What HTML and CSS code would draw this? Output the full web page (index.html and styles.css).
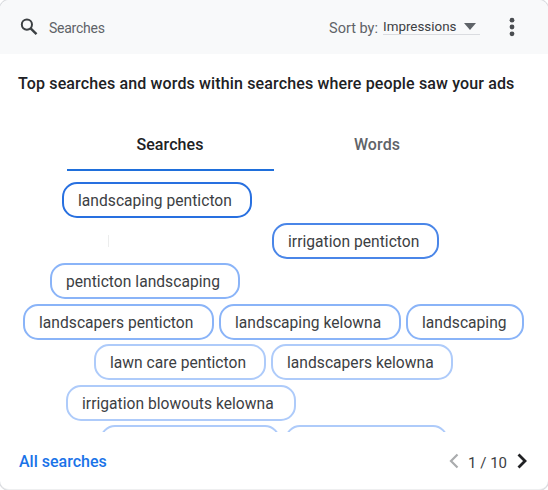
FILE: index.html
```html
<!DOCTYPE html>
<html lang="en">
<head>
    <meta charset="UTF-8">
    <meta name="viewport" content="width=device-width, initial-scale=1.0">
    <title>Searches</title>
    <link rel="stylesheet" href="styles.css">
</head>
<body>
    <div class="card">
        <header class="header">
            <svg class="search-icon" width="18" height="18" viewBox="0 0 18 18">
                <circle cx="6.9" cy="6.6" r="5.1" fill="none" stroke="#3c4043" stroke-width="2"/>
                <path d="M10.6 10.3L16.5 16.2" stroke="#3c4043" stroke-width="2.4"/>
            </svg>
            <span class="header-title">Searches</span>
            <span class="sort-label">Sort by:</span>
            <div class="sort-select">
                <span>Impressions</span>
                <svg width="12" height="7" viewBox="0 0 12 7"><path d="M0 0H12L6 7Z" fill="#5f6368"/></svg>
            </div>
            <svg class="more-icon" width="6" height="20" viewBox="0 0 6 20" fill="#4a4d51">
                <circle cx="3" cy="3.2" r="2.4"/>
                <circle cx="3" cy="10" r="2.4"/>
                <circle cx="3" cy="16.8" r="2.4"/>
            </svg>
        </header>

        <h1 class="title">Top searches and words within searches where people saw your ads</h1>

        <div class="tabs">
            <div class="tab active">Searches</div>
            <div class="tab">Words</div>
        </div>

        <div class="cloud">
            <div class="row row-1">
                <span class="chip w-190 level-1">landscaping penticton</span>
            </div>
            <div class="row row-2">
                <i class="tick"></i>
                <span class="chip w-167 level-2">irrigation penticton</span>
            </div>
            <div class="row row-3">
                <span class="chip w-190 level-3">penticton landscaping</span>
            </div>
            <div class="row row-4">
                <span class="chip w-191 level-3">landscapers penticton</span>
                <span class="chip w-182 level-3">landscaping kelowna</span>
                <span class="chip w-118 level-3">landscaping</span>
            </div>
            <div class="row row-5">
                <span class="chip w-172 level-4">lawn care penticton</span>
                <span class="chip w-182 level-4">landscapers kelowna</span>
            </div>
            <div class="row row-6">
                <span class="chip w-230 level-4">irrigation blowouts kelowna</span>
            </div>
            <div class="row row-7">
                <span class="chip w-180 level-4"></span>
                <span class="chip w-163 level-4"></span>
            </div>
        </div>

        <footer class="footer">
            <a class="all-link">All searches</a>
            <div class="pager">
                <svg width="10" height="16" viewBox="0 0 10 16"><path d="M8.5 1.5L2 8L8.5 14.5" fill="none" stroke="#aaacae" stroke-width="2.2"/></svg>
                <span class="pages">1 / 10</span>
                <svg width="10" height="16" viewBox="0 0 10 16"><path d="M1.5 1.5L8 8L1.5 14.5" fill="none" stroke="#202124" stroke-width="2.8"/></svg>
            </div>
        </footer>
    </div>
</body>
</html>
```
FILE: styles.css
```css
* {
    box-sizing: border-box;
}
body {
    margin: 0;
    background-color: #fff;
    font-family: Roboto, "Liberation Sans", sans-serif;
    color: #3c4043;
}
.card {
    height: 490px;
    display: flex;
    flex-direction: column;
    border-radius: 9px;
    box-shadow: 0 0 0 1px #dadce0;
    border-bottom: 1px solid #eeeff0;
    background-color: #fff;
    overflow: hidden;
}
.header {
    display: flex;
    height: 54px;
    padding: 18px 33px 0 20px;
    background-color: #f8f9fa;
    font-size: 14px;
    line-height: 20px;
}
.header-title {
    margin-left: 11px;
    letter-spacing: -0.25px;
    color: #5f6368;
}
.sort-label {
    margin-left: auto;
    margin-right: 5px;
    padding-top: 1px;
    font-size: 14.5px;
    color: #5f6368;
}
.sort-select {
    display: flex;
    width: 97px;
    height: 17px;
    padding-right: 4px;
    justify-content: space-between;
    align-items: center;
    border-bottom: 1px solid #dadce0;
    font-size: 13.4px;
    line-height: 17px;
}
.more-icon {
    margin-left: 29px;
    margin-top: -1px;
}
.title {
    margin: 20px 0 0 18px;
    font-size: 16px;
    font-weight: 500;
    line-height: 20px;
    letter-spacing: 0.14px;
    white-space: nowrap;
    color: #202124;
}
.tabs {
    display: flex;
    height: 46px;
    margin: 31px 67px 0;
}
.tab {
    width: 207px;
    padding: 10px 1px 0 0;
    text-align: center;
    font-size: 16px;
    font-weight: 500;
    line-height: 20px;
    letter-spacing: 0.1px;
    color: #5f6368;
}
.tab.active {
    color: #202124;
    border-bottom: 2px solid #1f6fdb;
}
.cloud {
    display: flex;
    flex-direction: column;
    gap: 4.5px;
    height: 261px;
    padding-top: 11px;
    overflow: hidden;
}
.row {
    display: flex;
    flex: none;
    height: 36px;
    gap: 5px;
}
.row-1 { padding-left: 62px; }
.row-2 { padding-left: 108px; }
.row-3 { padding-left: 50px; }
.row-4 { padding-left: 23px; }
.row-5 { padding-left: 94px; }
.row-6 { padding-left: 66px; }
.row-7 { padding-left: 100px; }
.tick {
    width: 1px;
    height: 12px;
    margin: 12px 158px 0 0;
    background-color: #eceded;
}
.chip {
    padding-left: 14px;
    border: 2px solid;
    border-radius: 15px;
    font-size: 15.6px;
    line-height: 35px;
    letter-spacing: 0.03px;
    white-space: nowrap;
}
.level-1 { border-color: #2870e0; }
.level-2 { border-color: #4a86e8; }
.level-3 { border-color: #8ab4f8; }
.level-4 { border-color: #aecbfa; }
.w-118 { width: 118px; }
.w-163 { width: 163px; }
.w-167 { width: 167px; }
.w-172 { width: 172px; }
.w-180 { width: 180px; }
.w-182 { width: 182px; }
.w-190 { width: 190px; }
.w-191 { width: 191px; }
.w-230 { width: 230px; }
.footer {
    display: flex;
    justify-content: space-between;
    align-items: flex-start;
    padding: 19px 21px 0 19px;
    line-height: 20px;
}
.all-link {
    padding-top: 1px;
    font-size: 16px;
    font-weight: 500;
    color: #1a73e8;
}
.pager {
    display: flex;
    align-items: flex-start;
    gap: 9px;
    padding-top: 2px;
    font-size: 15px;
}
.pages {
    padding-right: 1px;
}
```
